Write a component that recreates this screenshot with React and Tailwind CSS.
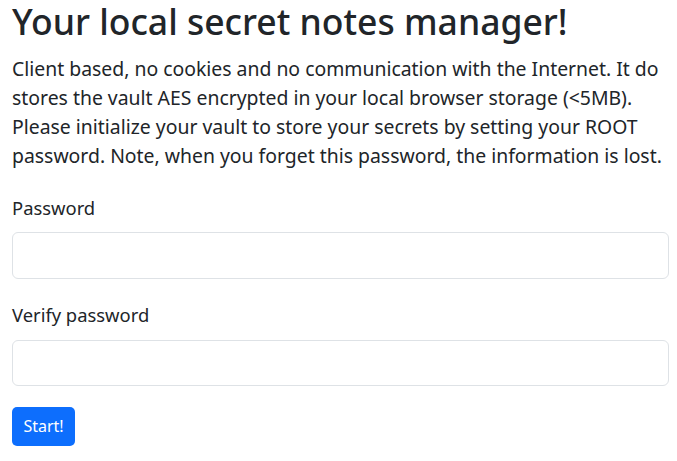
export default function App() {
  return (
    <div className="min-h-screen bg-white pl-[12px] pr-[8px] text-[#212529] font-['Noto_Sans',sans-serif]">
      <h1 className="text-[35.5px] leading-[43.2px] font-medium mb-[12px]">
        Your local secret notes manager!
      </h1>
      <p className="text-[19.4px] leading-[28.8px]">
        Client based, no cookies and no communication with the Internet. It do
        stores the vault AES encrypted in your local browser storage (&lt;5MB).
        Please initialize your vault to store your secrets by setting your ROOT
        password. Note, when you forget this password, the information is lost.
      </p>
      <form onSubmit={(e) => e.preventDefault()}>
        <div className="mt-[23.6px] mb-[22px]">
          <label className="block text-[18.4px] leading-[28.8px] mb-[9.6px]">Password</label>
          <input
            type="password"
            className="block w-full h-[47px] rounded-[6px] border border-[#dee2e6] px-[14px] outline-none"
          />
        </div>
        <div className="mb-[21px]">
          <label className="block text-[18.4px] leading-[28.8px] mb-[9.6px]">Verify password</label>
          <input
            type="password"
            className="block w-full h-[46px] rounded-[6px] border border-[#dee2e6] px-[14px] outline-none"
          />
        </div>
        <button
          type="submit"
          className="h-[39px] w-[63px] rounded-[5px] bg-[#0d6efd] text-white text-[16px] leading-[24px]"
        >
          Start!
        </button>
      </form>
    </div>
  );
}
